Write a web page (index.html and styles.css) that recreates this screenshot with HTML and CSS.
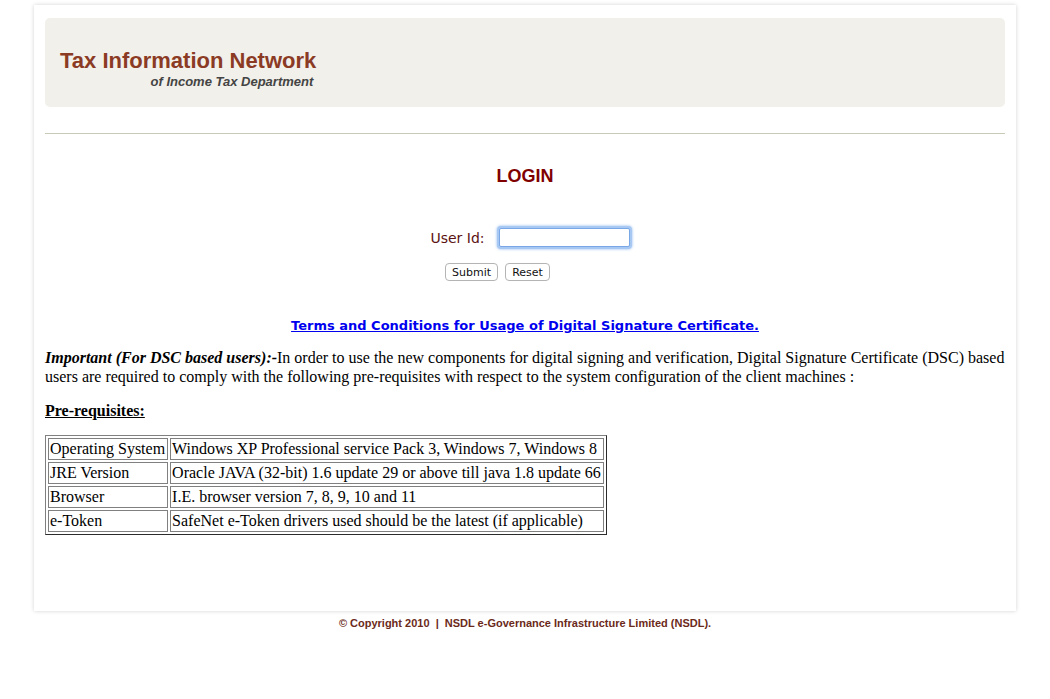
FILE: index.html
```html
<!DOCTYPE html>
<html>
<head>
<meta charset="utf-8">
<title>TIN Login</title>
<link rel="stylesheet" href="styles.css">
</head>
<body>
<div class="page">
  <div class="header">
    <div class="brand">
      <div class="brand-title">Tax Information Network</div>
      <div class="brand-sub">of Income Tax Department</div>
    </div>
  </div>
  <div class="rule"></div>
  <h1 class="login-title">LOGIN</h1>
  <form class="login-form">
    <div class="field-row">
      <label class="field-label" for="uid">User Id:</label>
      <input class="field-input" id="uid" type="text" autofocus>
    </div>
    <div class="btn-row">
      <button type="button" class="btn">Submit</button>
      <button type="reset" class="btn">Reset</button>
    </div>
  </form>
  <div class="terms"><a href="#">Terms and Conditions for Usage of Digital Signature Certificate.</a></div>
  <p class="note"><b><i>Important (For DSC based users):-</i></b>In order to use the new components for digital signing and verification, Digital Signature Certificate (DSC) based users are required to comply with the following pre-requisites with respect to the system configuration of the client machines :</p>
  <p class="prereq">Pre-requisites:</p>
  <table class="req-table" border="1" cellspacing="2">
    <tr><td>Operating System</td><td>Windows XP Professional service Pack 3, Windows 7, Windows 8</td></tr>
    <tr><td>JRE Version</td><td>Oracle JAVA (32-bit) 1.6 update 29 or above till java 1.8 update 66</td></tr>
    <tr><td>Browser</td><td>I.E. browser version 7, 8, 9, 10 and 11</td></tr>
    <tr><td>e-Token</td><td>SafeNet e-Token drivers used should be the latest (if applicable)</td></tr>
  </table>
</div>
<div class="footer">© Copyright 2010 &nbsp;|&nbsp; NSDL e-Governance Infrastructure Limited (NSDL).</div>
</body>
</html>
```
FILE: styles.css
```css
html, body {
  margin: 0;
  padding: 0;
  background: #ffffff;
}
body {
  font-family: "Liberation Serif", "Times New Roman", serif;
  font-size: 16px;
  color: #000;
}
.page {
  width: 960px;
  margin: 5px auto 0;
  padding: 13px 11px 76px;
  background: #fff;
  box-shadow: 0 0 4px rgba(0,0,0,0.18);
}
.header {
  height: 89px;
  background: #f2f0ea;
  border-radius: 5px;
  display: flex;
  align-items: center;
}
.brand {
  margin-left: 15px;
  margin-top: 12px;
  display: flex;
  flex-direction: column;
  align-items: flex-end;
}
.brand-title {
  font-family: "Liberation Sans", Arial, sans-serif;
  font-weight: bold;
  font-size: 22px;
  color: #8b3a24;
  line-height: 26px;
}
.brand-sub {
  font-family: "Liberation Sans", Arial, sans-serif;
  font-weight: bold;
  font-style: italic;
  font-size: 13px;
  color: #444;
  line-height: 16px;
  margin-right: 3px;
}
.rule {
  margin-top: 26px;
  border-top: 1px solid #c9c9b8;
}
.login-title {
  margin: 31px 0 0;
  text-align: center;
  font-family: "Liberation Sans", Arial, sans-serif;
  font-size: 18px;
  font-weight: bold;
  color: #800000;
  line-height: 22px;
}
.login-form {
  margin: 41px 0 0;
}
.field-row {
  display: flex;
  justify-content: center;
  align-items: center;
  gap: 14px;
  margin-left: 10px;
}
.field-label {
  font-family: "DejaVu Sans", Verdana, sans-serif;
  font-size: 14px;
  color: #5c1212;
}
.field-input {
  width: 125px;
  height: 15px;
  padding: 1px 2px;
  border: 1px solid #7aa7e6;
  outline: none;
  box-shadow: 0 0 0 2px #a8c8f4, 0 0 3px 2px #8cb6ef;
  border-radius: 2px;
}
.btn-row {
  display: flex;
  justify-content: center;
  gap: 7px;
  margin-top: 16px;
  margin-right: 55px;
}
.btn {
  font-family: "DejaVu Sans", Verdana, sans-serif;
  font-size: 11px;
  height: 18px;
  padding: 0 6px;
  background: #fff;
  border: 1px solid #b4b4b4;
  border-radius: 4px;
  color: #111;
}
.terms {
  margin-top: 37px;
  text-align: center;
  font-family: "DejaVu Sans", Verdana, sans-serif;
  font-size: 13px;
  font-weight: bold;
}
.terms a {
  color: #0000ee;
}
.note {
  margin: 15px 0 0;
  line-height: 19px;
}
.prereq {
  margin: 15px 0 0;
  font-weight: bold;
  text-decoration: underline;
  line-height: 19px;
}
.req-table {
  margin-top: 15px;
  border-collapse: separate;
  border-color: #808080;
}
.req-table td {
  padding: 1px 2px 1px 1px;
  line-height: 18px;
  border: 1px solid #808080;
}
.footer {
  text-align: center;
  margin-top: 6px;
  font-family: "Liberation Sans", Arial, sans-serif;
  font-size: 11px;
  font-weight: bold;
  color: #6b2a1a;
}
```
